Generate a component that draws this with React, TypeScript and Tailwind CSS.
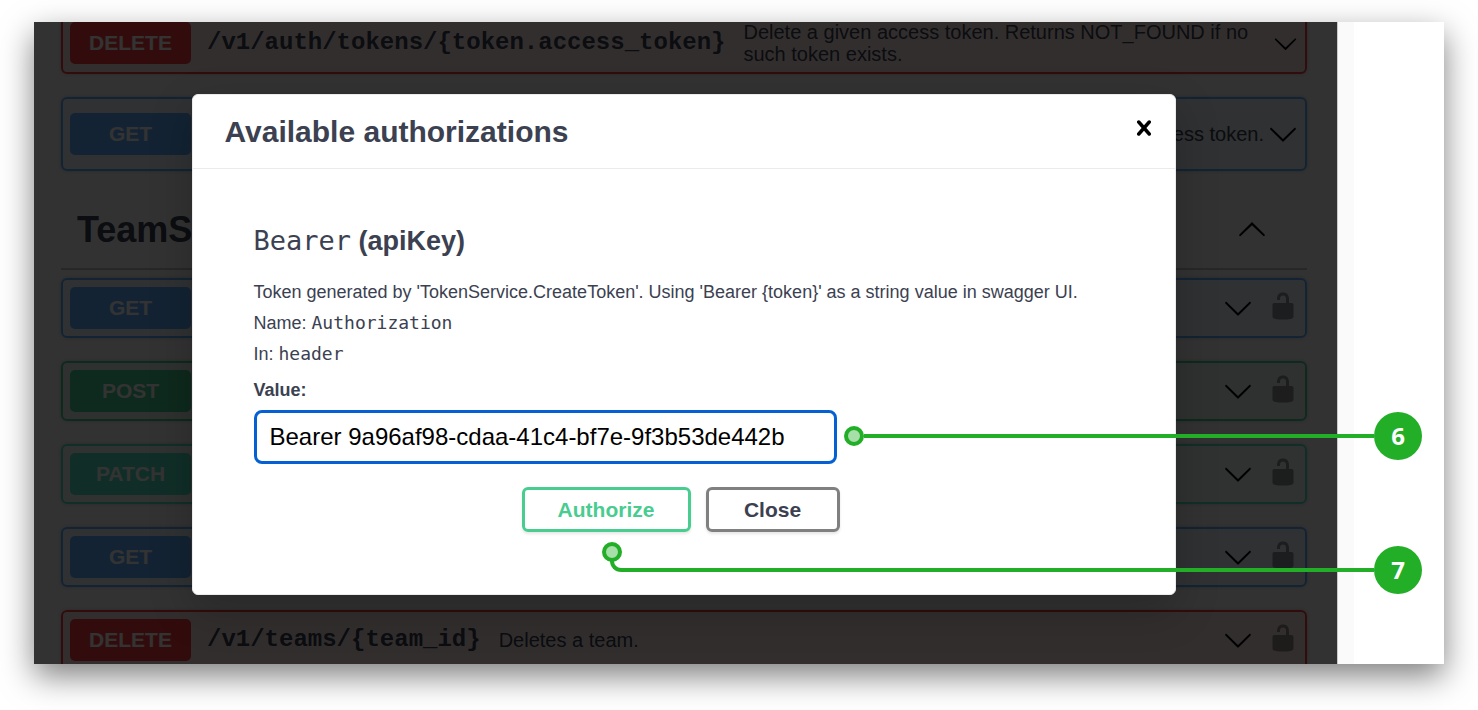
import type { ReactNode } from 'react';
import clsx from 'clsx';

type Method = 'GET' | 'POST' | 'PATCH' | 'DELETE';

const rowStyles: Record<Method, string> = {
  GET: 'border-[#61affe] bg-[#61affe]/10',
  POST: 'border-[#49cc90] bg-[#49cc90]/10',
  PATCH: 'border-[#50e3c2] bg-[#50e3c2]/10',
  DELETE: 'border-[#f93e3e] bg-[#f93e3e]/10',
};

const badgeStyles: Record<Method, string> = {
  GET: 'bg-[#61affe]',
  POST: 'bg-[#49cc90]',
  PATCH: 'bg-[#50e3c2]',
  DELETE: 'bg-[#f93e3e]',
};

function Chevron({ className = 'size-[30px]' }: { className?: string }) {
  return (
    <svg viewBox="0 0 20 20" className={clsx('shrink-0 fill-black', className)} aria-hidden="true">
      <path d="M17.418 6.109c.272-.268.709-.268.979 0s.271.701 0 .969l-7.908 7.83c-.27.268-.707.268-.979 0l-7.908-7.83c-.27-.268-.27-.701 0-.969.271-.268.709-.268.979 0L10 13.25l7.418-7.141z" />
    </svg>
  );
}

function Unlocked() {
  return (
    <svg viewBox="0 0 20 20" className="size-[30px] fill-black opacity-40" aria-hidden="true">
      <path d="M15.8 8H14V5.6C14 2.703 12.665 1 10 1 7.334 1 6 2.703 6 5.6V6h2v-.801C8 3.754 8.797 3 10 3c1.203 0 2 .754 2 2.199V8H4c-.553 0-1 .646-1 1.199V17c0 .549.428 1.139.951 1.307l1.197.387C5.672 18.861 6.55 19 7.1 19h5.8c.549 0 1.428-.139 1.951-.307l1.196-.387c.524-.167.953-.757.953-1.306V9.199C17 8.646 16.352 8 15.8 8z" />
    </svg>
  );
}

type OperationProps = {
  method: Method;
  path?: string;
  children?: ReactNode;
  locked?: boolean;
  chevron?: string;
  className?: string;
};

function Operation({ method, path, children, locked = true, chevron, className }: OperationProps) {
  return (
    <div className={clsx('flex items-center rounded-md border-2 p-[7px] shadow-[0_0_5px_rgba(0,0,0,0.19)]', rowStyles[method], className)}>
      <span className={clsx('flex h-[42px] w-[121px] shrink-0 items-center justify-center rounded-[5px] text-[21px] font-bold text-white', badgeStyles[method])}>
        {method}
      </span>
      <div className="flex flex-1 items-center gap-[18px] pl-4">
        {path && <span className="font-['Liberation_Mono',monospace] text-2xl font-bold">{path}</span>}
        {children}
      </div>
      <button type="button" aria-label="Expand operation" className="shrink-0">
        <Chevron className={chevron} />
      </button>
      {locked && (
        <button type="button" aria-label="Authorization button unlocked" className="ml-[15px] shrink-0 pb-1">
          <Unlocked />
        </button>
      )}
    </div>
  );
}

function AuthDialog() {
  return (
    <div
      role="dialog"
      aria-labelledby="auth-title"
      className="w-[90%] max-w-[984px] rounded-md border border-[#ebebeb] bg-white shadow-[0_15px_45px_rgba(0,0,0,0.2)]"
    >
      <div className="flex h-[74px] items-center justify-between border-b border-[#ebebeb] pr-4 pl-8">
        <h3 id="auth-title" className="text-3xl font-bold">Available authorizations</h3>
        <button type="button" aria-label="Close dialog" className="pb-2">
          <svg viewBox="0 0 20 20" className="size-[30px] fill-black" aria-hidden="true">
            <path d="M14.348 14.849c-.469.469-1.229.469-1.697 0L10 11.819l-2.651 3.029c-.469.469-1.229.469-1.697 0-.469-.469-.469-1.229 0-1.697l2.758-3.15-2.759-3.152c-.469-.469-.469-1.228 0-1.697.469-.469 1.228-.469 1.697 0L10 8.183l2.651-3.031c.469-.469 1.228-.469 1.697 0 .469.469.469 1.229 0 1.697l-2.758 3.152 2.758 3.15c.469.469.469 1.229 0 1.698z" />
          </svg>
        </button>
      </div>

      <form className="pt-[54px] pr-[67px] pb-[62px] pl-[61px] text-[18px]">
        <h4 className="mb-[18px] text-[27px] leading-9 font-bold">
          <code className="font-['DejaVu_Sans_Mono',monospace] leading-none font-normal">Bearer</code> (apiKey)
        </h4>
        <p className="leading-[31px]">
          Token generated by 'TokenService.CreateToken'. Using 'Bearer {'{token}'}' as a string value in swagger UI.
        </p>
        <p className="leading-[31px]">
          Name: <code className="font-['DejaVu_Sans_Mono',monospace] leading-none">Authorization</code>
        </p>
        <p className="leading-[31px]">
          In: <code className="font-['DejaVu_Sans_Mono',monospace] leading-none">header</code>
        </p>
        <label htmlFor="api-key" className="mt-[5px] mb-[5px] block leading-[30px] font-bold">Value:</label>
        <input
          id="api-key"
          type="text"
          defaultValue="Bearer 9a96af98-cdaa-41c4-bf7e-9f3b53de442b"
          className="block h-[54px] w-full max-w-[583px] rounded-lg border-[3px] border-[#0561d3] bg-white px-[13px] text-2xl text-black outline-none"
        />
        <div className="mt-[23px] flex justify-center gap-[15px] text-[21px] font-bold">
          <button type="button" className="h-[45px] w-[169px] rounded-md border-[3px] border-[#49cc90] text-[#49cc90] shadow-[0_2px_3px_rgba(0,0,0,0.1)]">
            Authorize
          </button>
          <button type="button" className="h-[45px] w-[134px] rounded-md border-[3px] border-[#808080] shadow-[0_2px_3px_rgba(0,0,0,0.1)]">
            Close
          </button>
        </div>
      </form>
    </div>
  );
}

function Step({ children }: { children: ReactNode }) {
  return (
    <span className="flex size-12 items-center justify-center rounded-full bg-[#23ae28] font-['Open_Sans',sans-serif] text-2xl font-bold text-white">
      {children}
    </span>
  );
}

export default function App() {
  return (
    <div className="flex h-screen bg-white px-[34px] pt-[22px] pb-[46px] font-['Liberation_Sans',Arial,sans-serif] text-[#3b4151]">
      <div className="relative flex flex-1 bg-white shadow-[0_12px_30px_rgba(0,0,0,0.5)]">
        <main className="relative flex-1 overflow-hidden border-r border-[#c8c8c8] bg-[#fafafa]">
          {/* Operations list */}
          <div className="-mt-[10px] flex flex-col gap-[23px] pr-[30px] pl-[27px] text-[20px] leading-[22px]">
            <Operation method="DELETE" path="/v1/auth/tokens/{token.access_token}" locked={false} chevron="size-[25px]" className="min-h-[62px]">
              <span className="max-w-[510px]">
                Delete a given access token. Returns NOT_FOUND if no such token exists.
              </span>
            </Operation>
            <Operation method="GET" locked={false} className="min-h-[74px]">
              <span className="ml-auto pr-1">access token.</span>
            </Operation>

            <section>
              <div className="-mt-0.5 mb-2 flex h-[78px] items-center justify-between border-b-2 border-[#3b4151]/30 pr-10 pl-4">
                <h2 className="text-4xl font-bold">TeamS</h2>
                <button type="button" aria-label="Collapse operation">
                  <Chevron className="size-[30px] rotate-180" />
                </button>
              </div>
              <div className="flex flex-col gap-[23px]">
                <Operation method="GET" />
                <Operation method="POST" />
                <Operation method="PATCH" />
                <Operation method="GET" />
                <Operation method="DELETE" path="/v1/teams/{team_id}">
                  <span>Deletes a team.</span>
                </Operation>
              </div>
            </section>
          </div>

          {/* Backdrop and dialog */}
          <div className="absolute inset-0 flex items-start justify-center bg-black/80 pt-[72px] pr-1">
            <AuthDialog />
          </div>
        </main>
        <div className="w-4 bg-[#fafafa]" />
        <div className="w-[90px]" />

        {/* Step 6: token field */}
        <div className="absolute top-[390px] right-[22px] left-[810px] flex items-center">
          <span className="size-5 shrink-0 rounded-full border-4 border-[#23ae28] bg-[#a6dfa8]" />
          <span className="h-1 flex-1 bg-[#23ae28]" />
          <Step>6</Step>
        </div>

        {/* Step 7: authorize button */}
        <div className="absolute top-[524px] right-[22px] left-[568px] flex">
          <span className="absolute -top-1 left-0 size-5 rounded-full border-4 border-[#23ae28] bg-[#a6dfa8]" />
          <span className="mt-[15px] ml-2 h-[11px] flex-1 rounded-bl-xl border-b-4 border-l-4 border-[#23ae28]" />
          <Step>7</Step>
        </div>
      </div>
    </div>
  );
}
